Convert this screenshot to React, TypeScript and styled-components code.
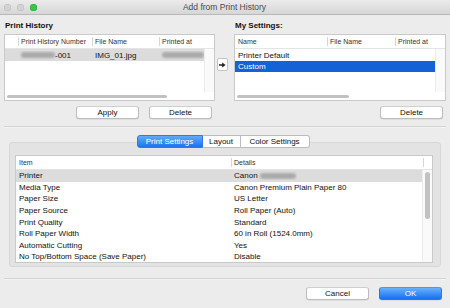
import styled, { createGlobalStyle } from "styled-components"

const GlobalStyle = createGlobalStyle`
  html, body {
    margin: 0;
    padding: 0;
    background: #ececec;
  }
  body {
    font-family: "Liberation Sans", Arial, sans-serif;
    color: #111;
  }
`

const Window = styled.div`
  width: 450px;
  height: 308px;
  background: #ececec;
  display: flex;
  flex-direction: column;
  overflow: hidden;
`

const TitleBar = styled.div`
  height: 14px;
  flex: none;
  display: flex;
  align-items: center;
  background: linear-gradient(#ebebeb, #d6d6d6);
  border-bottom: 1px solid #b9b9b9;
`

const Lights = styled.div`
  display: flex;
  gap: 6px;
  padding-left: 4px;
`

const Light = styled.span<{ $color: string; $border: string }>`
  width: 7px;
  height: 7px;
  border-radius: 50%;
  background: ${(p) => p.$color};
  box-shadow: inset 0 0 0 0.5px ${(p) => p.$border};
`

const Title = styled.div`
  flex: 1;
  text-align: center;
  font-size: 8.5px;
  color: #4a4a4a;
  margin-right: 38px;
`

const TopSection = styled.div`
  display: grid;
  grid-template-columns: 211px 19px 212px;
  padding: 5px 4px 0;
`

const Panel = styled.div`
  display: flex;
  flex-direction: column;
`

const Label = styled.div`
  font-size: 8px;
  font-weight: bold;
  height: 14px;
  line-height: 12px;
  padding-left: 1px;
`

const Table = styled.div<{ $height: number }>`
  height: ${(p) => p.$height}px;
  background: #fff;
  border: 1px solid #c9c9c9;
  box-sizing: border-box;
  display: flex;
  flex-direction: column;
  overflow: hidden;
`

const HeaderRow = styled.div<{ $cols: string }>`
  display: grid;
  grid-template-columns: ${(p) => p.$cols};
  height: 13px;
  flex: none;
  border-bottom: 1px solid #e4e4e4;
  font-size: 7px;
  color: #333;
`

const HeaderCell = styled.div<{ $sep?: boolean }>`
  display: flex;
  align-items: center;
  padding-left: 3px;
  white-space: nowrap;
  overflow: hidden;
  position: relative;
  &::before {
    content: "";
    display: ${(p) => (p.$sep ? "block" : "none")};
    position: absolute;
    left: 0;
    top: 2px;
    bottom: 2px;
    width: 1px;
    background: #d6d6d6;
  }
`

const Body = styled.div`
  flex: 1;
  display: flex;
  min-height: 0;
`

const Rows = styled.div`
  flex: 1;
  min-width: 0;
  overflow: hidden;
`

const Row = styled.div<{ $cols: string; $sel?: "grey" | "blue"; $h: number }>`
  display: grid;
  grid-template-columns: ${(p) => p.$cols};
  height: ${(p) => p.$h}px;
  align-items: center;
  font-size: 8px;
  white-space: nowrap;
  background: ${(p) =>
    p.$sel === "grey" ? "#dcdcdc" : p.$sel === "blue" ? "#1462d6" : "transparent"};
  color: ${(p) => (p.$sel === "blue" ? "#fff" : "#111")};
`

const Cell = styled.div`
  padding-left: 3px;
  overflow: hidden;
`

const Blurred = styled.span<{ $w: number }>`
  display: inline-block;
  width: ${(p) => p.$w}px;
  height: 6px;
  vertical-align: middle;
  background: #9a9a9a;
  border-radius: 3px;
  filter: blur(1.3px);
  opacity: 0.75;
`

const VStrip = styled.div`
  width: 9px;
  flex: none;
  background: #fafafa;
  border-left: 1px solid #ececec;
  position: relative;
`

const VThumb = styled.div`
  position: absolute;
  left: 2px;
  top: 2px;
  width: 5px;
  height: 47px;
  border-radius: 3px;
  background: #c2c2c2;
`

const HScroll = styled.div`
  height: 8px;
  flex: none;
  display: flex;
  align-items: center;
  padding: 0 2px;
`

const HThumb = styled.div<{ $w: number }>`
  width: ${(p) => p.$w}px;
  height: 3px;
  border-radius: 2px;
  background: #c2c2c2;
`

const ButtonRow = styled.div`
  display: flex;
  justify-content: flex-end;
  gap: 10px;
  padding: 5px 3px 0;
`

const Button = styled.button<{ $primary?: boolean }>`
  width: 63px;
  height: 13px;
  padding: 0;
  margin: 0;
  font-family: inherit;
  font-size: 8px;
  line-height: 11px;
  border-radius: 3px;
  border: 1px solid ${(p) => (p.$primary ? "#2a78e6" : "#bdbdbd")};
  border-top-color: ${(p) => (p.$primary ? "#4c95f5" : "#cfcfcf")};
  background: ${(p) => (p.$primary ? "linear-gradient(#69b1fb, #1371f1)" : "#fff")};
  color: ${(p) => (p.$primary ? "#fff" : "#111")};
  box-shadow: 0 0.5px 0.5px rgba(0, 0, 0, 0.12);
`

const ArrowCell = styled.div`
  padding-top: 38px;
  padding-left: 2px;
`

const ArrowButton = styled.div`
  width: 11px;
  height: 13px;
  box-sizing: border-box;
  background: #fff;
  border: 1px solid #c3c3c3;
  border-radius: 2px;
  display: flex;
  align-items: center;
  justify-content: center;
`

const Separator = styled.div<{ $top: number }>`
  height: 1px;
  margin: ${(p) => p.$top}px 4px 0;
  background: #d3d3d3;
  border-bottom: 1px solid #f4f4f4;
  flex: none;
`

const SettingsArea = styled.div`
  display: flex;
  flex-direction: column;
  padding: 7px 9px 0;
`

const Tabs = styled.div`
  display: flex;
  justify-content: center;
  margin-bottom: -6px;
  position: relative;
  z-index: 1;
  padding-right: 4px;
`

const Tab = styled.div<{ $active?: boolean; $w: number }>`
  width: ${(p) => p.$w}px;
  height: 13px;
  box-sizing: border-box;
  font-size: 8px;
  display: flex;
  align-items: center;
  justify-content: center;
  background: ${(p) => (p.$active ? "linear-gradient(#5fabfa, #1a74ee)" : "#fff")};
  color: ${(p) => (p.$active ? "#fff" : "#111")};
  border: 1px solid ${(p) => (p.$active ? "#2d7ae6" : "#bcbcbc")};
  border-left-width: 0;
  &:first-child {
    border-left-width: 1px;
    border-radius: 3px 0 0 3px;
  }
  &:last-child {
    border-radius: 0 3px 3px 0;
  }
`

const GroupBox = styled.div`
  height: 125px;
  box-sizing: border-box;
  background: #e3e3e3;
  border: 1px solid #d7d7d7;
  border-radius: 3px;
  padding: 12px 7px 0 5px;
`

const Footer = styled.div`
  display: flex;
  justify-content: flex-end;
  gap: 10px;
  padding: 7px 8px 0;
`

const Arrow = () => (
  <svg width="7" height="6" viewBox="0 0 7 6">
    <path d="M0 2.2h3.2V0.4L6.6 3 3.2 5.6V3.8H0z" fill="#222" />
  </svg>
)

const histCols = "13px 74px 67px 1fr"
const myCols = "92px 68px 1fr"
const setCols = "215px 1fr"

const settings: [string, string][] = [
  ["Printer", "Canon"],
  ["Media Type", "Canon Premium Plain Paper 80"],
  ["Paper Size", "US Letter"],
  ["Paper Source", "Roll Paper (Auto)"],
  ["Print Quality", "Standard"],
  ["Roll Paper Width", "60 in Roll (1524.0mm)"],
  ["Automatic Cutting", "Yes"],
  ["No Top/Bottom Space (Save Paper)", "Disable"],
]

export default function App() {
  return (
    <Window>
      <GlobalStyle />
      <TitleBar>
        <Lights>
          <Light $color="#d3d3d3" $border="#bcbcbc" />
          <Light $color="#d3d3d3" $border="#bcbcbc" />
          <Light $color="#34c84a" $border="#2aa83c" />
        </Lights>
        <Title>Add from Print History</Title>
      </TitleBar>

      <TopSection>
        <Panel>
          <Label>Print History</Label>
          <Table $height={67}>
            <HeaderRow $cols={histCols}>
              <HeaderCell />
              <HeaderCell $sep>Print History Number</HeaderCell>
              <HeaderCell $sep>File Name</HeaderCell>
              <HeaderCell $sep>Printed at</HeaderCell>
            </HeaderRow>
            <Body>
              <Rows>
                <Row $cols={histCols} $sel="grey" $h={12}>
                  <Cell />
                  <Cell>
                    <Blurred $w={34} />
                    -001
                  </Cell>
                  <Cell>IMG_01.jpg</Cell>
                  <Cell>
                    <Blurred $w={42} />
                  </Cell>
                </Row>
              </Rows>
              <VStrip />
            </Body>
            <HScroll>
              <HThumb $w={160} />
            </HScroll>
          </Table>
          <ButtonRow>
            <Button>Apply</Button>
            <Button>Delete</Button>
          </ButtonRow>
        </Panel>

        <ArrowCell>
          <ArrowButton>
            <Arrow />
          </ArrowButton>
        </ArrowCell>

        <Panel>
          <Label>My Settings:</Label>
          <Table $height={67}>
            <HeaderRow $cols={myCols}>
              <HeaderCell>Name</HeaderCell>
              <HeaderCell $sep>File Name</HeaderCell>
              <HeaderCell $sep>Printed at</HeaderCell>
            </HeaderRow>
            <Body>
              <Rows>
                <Row $cols={myCols} $h={12}>
                  <Cell>Printer Default</Cell>
                </Row>
                <Row $cols={myCols} $sel="blue" $h={11}>
                  <Cell>Custom</Cell>
                </Row>
              </Rows>
              <VStrip />
            </Body>
            <HScroll>
              <HThumb $w={112} />
            </HScroll>
          </Table>
          <ButtonRow>
            <Button>Delete</Button>
          </ButtonRow>
        </Panel>
      </TopSection>

      <Separator $top={7} />

      <SettingsArea>
        <Tabs>
          <Tab $active $w={66}>Print Settings</Tab>
          <Tab $w={38}>Layout</Tab>
          <Tab $w={69}>Color Settings</Tab>
        </Tabs>
        <GroupBox>
          <Table $height={108}>
            <HeaderRow $cols={`${setCols} 9px`}>
              <HeaderCell>Item</HeaderCell>
              <HeaderCell $sep>Details</HeaderCell>
              <HeaderCell $sep />
            </HeaderRow>
            <Body>
              <Rows>
                {settings.map(([item, detail], i) => (
                  <Row key={item} $cols={setCols} $sel={i === 0 ? "grey" : undefined} $h={11.6}>
                    <Cell>{item}</Cell>
                    <Cell>
                      {detail}
                      {i === 0 && (
                        <>
                          {" "}
                          <Blurred $w={36} />
                        </>
                      )}
                    </Cell>
                  </Row>
                ))}
              </Rows>
              <VStrip>
                <VThumb />
              </VStrip>
            </Body>
          </Table>
        </GroupBox>
      </SettingsArea>

      <Separator $top={11} />

      <Footer>
        <Button>Cancel</Button>
        <Button $primary>OK</Button>
      </Footer>
    </Window>
  )
}
